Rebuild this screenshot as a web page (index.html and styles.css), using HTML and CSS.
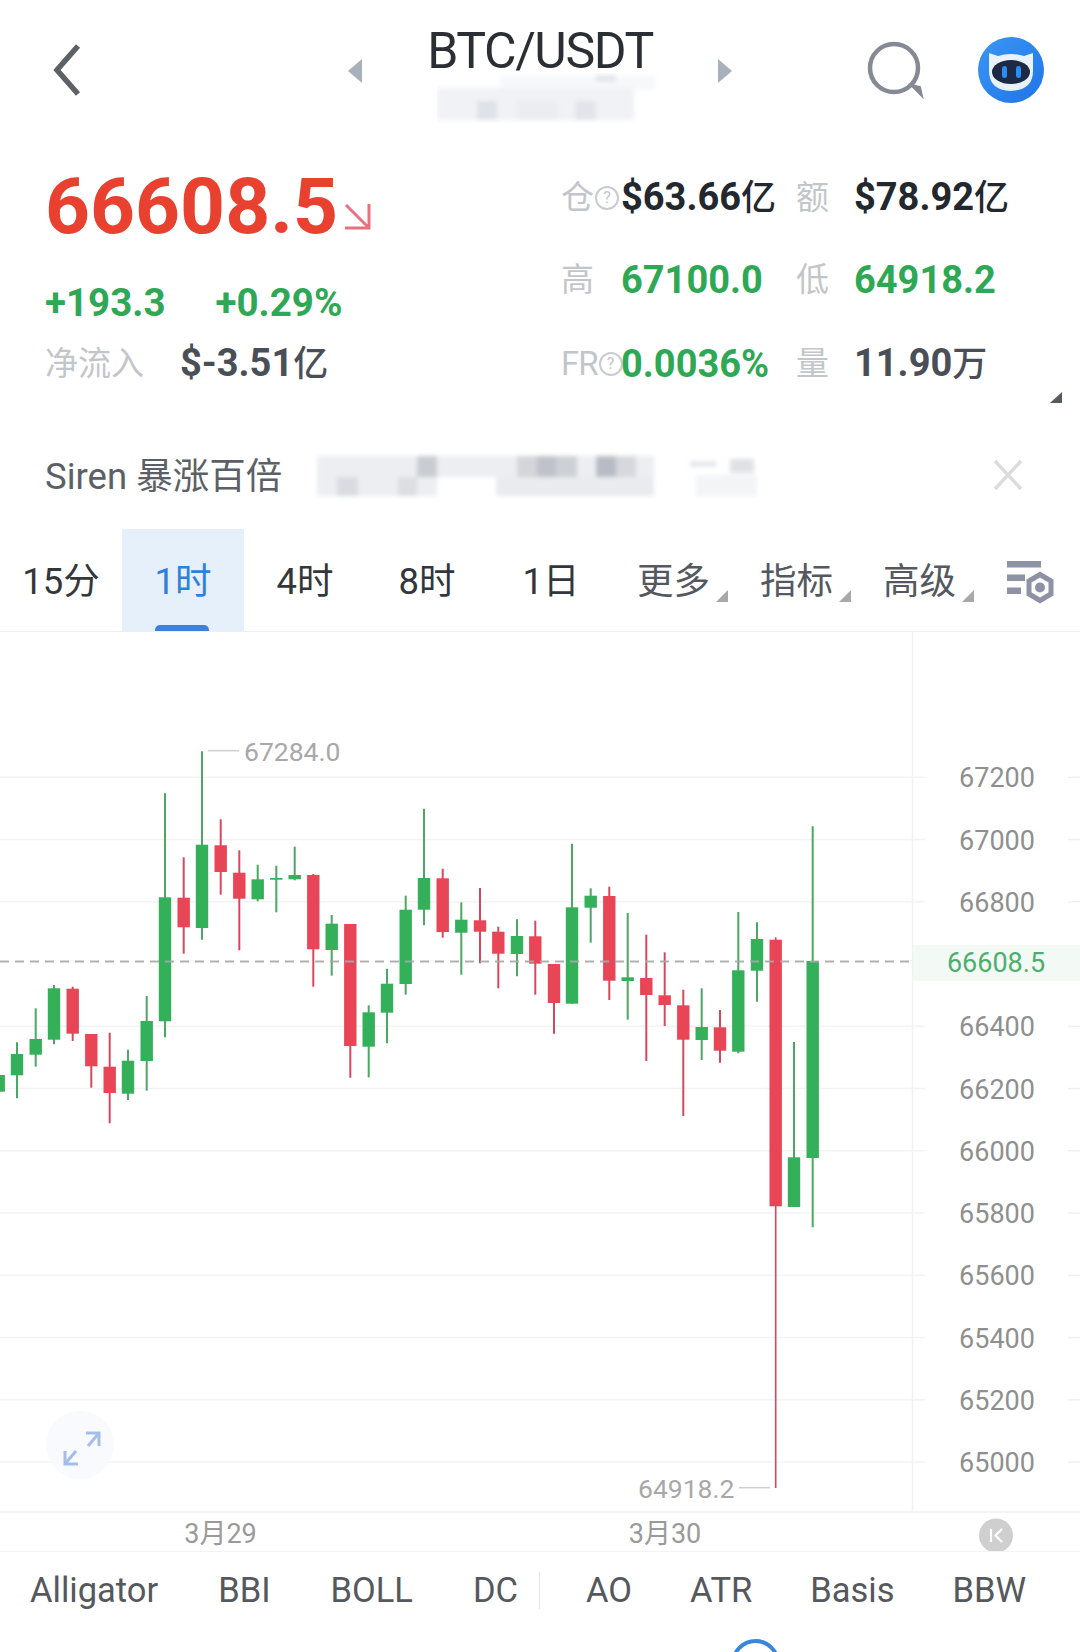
FILE: index.html
```
<!DOCTYPE html>
<html lang="zh-CN">
<head>
    <meta charset="UTF-8">
    <meta name="viewport" content="width=device-width, initial-scale=1.0">
    <title>BTC/USDT</title>
    <link rel="stylesheet" href="styles.css">
</head>
<body>

<header class="topbar">
    <div class="topbar-left">
        <svg class="back-icon" width="28" height="54" viewBox="0 0 28 54"><path d="M25 3 L4 27 L25 51" fill="none" stroke="#5c6168" stroke-width="5.5"/></svg>
    </div>
    <div class="pair-nav">
        <span class="nav-arrow nav-prev"></span>
        <div class="pair">
            <h1 class="pair-name">BTC/USDT</h1>
            <svg class="blur-block" width="226" height="52" viewBox="437 72 226 52">
                <g filter="url(#soft)">
                    <rect x="500" y="75" width="155" height="14" fill="#f7f8fa"/>
                    <rect x="596" y="74" width="20" height="7" fill="#e4e6ea"/>
                    <rect x="437" y="87" width="197" height="32" fill="#f0f2f5"/>
                    <rect x="477" y="100" width="20" height="19" fill="#dfe2e9"/>
                    <rect x="517" y="100" width="41" height="19" fill="#ebedf1"/>
                    <rect x="575" y="100" width="21" height="19" fill="#e2e4ea"/>
                </g>
            </svg>
        </div>
        <span class="nav-arrow nav-next"></span>
    </div>
    <div class="topbar-right">
        <svg width="60" height="60" viewBox="0 0 60 60"><circle cx="28" cy="27" r="24" fill="none" stroke="#868a94" stroke-width="4.5"/><path d="M45 44 L56 55 L54 46 Z" fill="#868a94" stroke="#868a94" stroke-width="2"/></svg>
        <svg class="logo" width="66" height="66" viewBox="0 0 66 66">
            <defs><linearGradient id="logoBlue" x1="0" y1="0" x2="1" y2="1"><stop offset="0" stop-color="#3a97f5"/><stop offset="1" stop-color="#1f74e6"/></linearGradient></defs>
            <circle cx="33" cy="33" r="33" fill="url(#logoBlue)"/>
            <path d="M11 16 L20 19 Q33 15 46 19 L55 16 L55 34 Q55 53 33 54 Q11 53 11 34 Z" fill="#e9f1fb"/>
            <ellipse cx="33" cy="35" rx="19" ry="12" fill="#1c2a44"/>
            <rect x="24" y="29" width="5" height="12" rx="2.5" fill="#2a8cf5"/>
            <rect x="38" y="29" width="5" height="12" rx="2.5" fill="#2a8cf5"/>
        </svg>
    </div>
</header>

<section class="stats">
    <div class="stats-left">
        <div class="price-line">
            <span class="price">66608.5</span>
            <svg class="price-arrow" width="28" height="28" viewBox="0 0 28 28"><path d="M2 26 H26 V2 M3 3 L25 25" fill="none" stroke="#e8707f" stroke-width="3"/></svg>
        </div>
        <div class="change-line">
            <span class="up">+193.3</span>
            <span class="up">+0.29%</span>
        </div>
        <div class="flow-line">
            <span class="label">净流入</span>
            <span class="flow-value">$-3.51<span class="unit">亿</span></span>
        </div>
    </div>
    <div class="stats-right">
        <div class="label label-tip">仓<i class="tip">?</i></div>
        <div class="value">$63.66<span class="unit">亿</span></div>
        <div class="label">额</div>
        <div class="value">$78.92<span class="unit">亿</span></div>

        <div class="label">高</div>
        <div class="value up">67100.0</div>
        <div class="label">低</div>
        <div class="value up">64918.2</div>

        <div class="label label-tip label-fr">FR<i class="tip">?</i></div>
        <div class="value up">0.0036%</div>
        <div class="label">量</div>
        <div class="value muted">11.90<span class="unit">万</span></div>
    </div>
    <span class="stats-more"></span>
</section>

<section class="banner">
    <span class="banner-text">Siren 暴涨百倍</span>
    <svg class="blur-block banner-blur" width="452" height="52" viewBox="312 452 452 52">
        <g filter="url(#soft)">
            <rect x="317" y="457" width="337" height="21" fill="#eceef1"/>
            <rect x="317" y="478" width="120" height="19" fill="#eceef1"/>
            <rect x="496" y="478" width="158" height="19" fill="#eaebee"/>
            <rect x="417" y="457" width="20" height="21" fill="#c9ccd2"/>
            <rect x="337" y="478" width="21" height="19" fill="#d9dbe0"/>
            <rect x="398" y="478" width="19" height="19" fill="#dcdee2"/>
            <rect x="517" y="457" width="20" height="21" fill="#d3d5da"/>
            <rect x="537" y="457" width="19" height="21" fill="#bfc2c9"/>
            <rect x="556" y="457" width="21" height="21" fill="#cdd0d5"/>
            <rect x="596" y="457" width="20" height="21" fill="#b7bbc3"/>
            <rect x="616" y="457" width="20" height="21" fill="#d6d8dd"/>
            <rect x="690" y="462" width="26" height="6" fill="#e6e7ea"/>
            <rect x="730" y="460" width="24" height="14" fill="#dfe1e5"/>
            <rect x="696" y="476" width="61" height="21" fill="#f3f4f6"/>
        </g>
    </svg>
    <svg class="banner-close" width="32" height="32" viewBox="0 0 32 32"><path d="M3 2 L29 30 M29 2 L3 30" fill="none" stroke="#dcdcdc" stroke-width="3.5"/></svg>
</section>

<nav class="tabs">
    <div class="tab">15分</div>
    <div class="tab tab-active">1时</div>
    <div class="tab">4时</div>
    <div class="tab">8时</div>
    <div class="tab tab-day">1日</div>
    <div class="tab tab-menu">更多</div>
    <div class="tab tab-menu">指标</div>
    <div class="tab tab-menu">高级</div>
    <svg class="tab-settings" width="50" height="44" viewBox="0 0 50 44">
        <rect x="0" y="0" width="34" height="6.5" fill="#8d93a5"/>
        <rect x="0" y="13.5" width="18" height="6.5" fill="#8d93a5"/>
        <rect x="0" y="26.5" width="14" height="6.5" fill="#8d93a5"/>
        <path d="M33 13.5 L44 20 V33 L33 39.5 L22 33 V20 Z" fill="none" stroke="#8d93a5" stroke-width="5"/>
        <circle cx="33" cy="26.5" r="5" fill="#8d93a5"/>
    </svg>
</nav>

<svg id="chart" class="chart" width="1080" height="920" viewBox="0 632 1080 920"></svg>

<footer class="indicators">
    <div class="ind-group">
        <span>Alligator</span>
        <span>BBI</span>
        <span>BOLL</span>
        <span>DC</span>
    </div>
    <span class="ind-divider"></span>
    <div class="ind-group ind-group-right">
        <span>AO</span>
        <span>ATR</span>
        <span>Basis</span>
        <span>BBW</span>
    </div>
</footer>

<div class="bottom-arc"></div>

<svg class="defs" width="0" height="0"><defs><filter id="soft" x="-5%" y="-20%" width="110%" height="140%"><feGaussianBlur stdDeviation="2"/></filter></defs></svg>

<script src="chart.js"></script>
</body>
</html>
```

FILE: styles.css
```
* {
    box-sizing: border-box;
}
html, body {
    margin: 0;
    padding: 0;
}
body {
    position: relative;
    width: 1080px;
    height: 1652px;
    overflow: hidden;
    background-color: #fff;
    color: #23272e;
    font-family: Roboto, "Noto Sans CJK SC", sans-serif;
}

/* top bar */
.topbar {
    display: grid;
    grid-template-columns: 348px 384px 348px;
    height: 156px;
}
.topbar-left {
    padding: 43px 0 0 53px;
}
.back-icon {
    display: block;
}
.pair-nav {
    display: flex;
    justify-content: space-between;
    align-items: flex-start;
}
.nav-arrow {
    width: 0;
    height: 0;
    margin-top: 59px;
    border-top: 12px solid transparent;
    border-bottom: 12px solid transparent;
}
.nav-prev {
    border-right: 14px solid #a8b0bc;
}
.nav-next {
    border-left: 14px solid #a8b0bc;
}
.pair {
    width: 226px;
    padding-top: 23px;
}
.pair-name {
    margin: 0;
    font-size: 50px;
    font-weight: 400;
    line-height: 56px;
    letter-spacing: -1.4px;
    text-align: center;
    white-space: nowrap;
    color: #2b2e33;
}
.blur-block {
    display: block;
}
.pair .blur-block {
    margin-top: -6px;
    margin-left: 10px;
}
.topbar-right {
    display: flex;
    justify-content: flex-end;
    align-items: flex-start;
    gap: 52px;
    padding: 41px 36px 0 0;
}
.logo {
    margin-top: -4px;
}

/* price block */
.stats {
    position: relative;
    display: flex;
    height: 249px;
}
.stats-left {
    width: 561px;
    padding: 5px 0 0 45px;
}
.price-line {
    display: flex;
    align-items: flex-start;
    height: 90px;
}
.price {
    font-size: 78.5px;
    font-weight: 700;
    line-height: 90px;
    color: #e8412f;
}
.price-arrow {
    margin: 41px 0 0 5px;
}
.change-line {
    display: flex;
    gap: 50px;
    margin-top: 29px;
    font-size: 38.5px;
    font-weight: 700;
    line-height: 46px;
}
.flow-line {
    display: flex;
    align-items: center;
    gap: 36px;
    margin-top: 14px;
    line-height: 46px;
}
.flow-value {
    font-size: 38px;
    font-weight: 700;
    line-height: 46px;
    color: #4a4f57;
}
.unit {
    font-size: 35px;
    font-weight: 500;
}
.up {
    color: #2fa855;
}
.muted {
    color: #4a4f57;
}
.label {
    font-size: 33px;
    line-height: 40px;
    color: #c2c6ca;
    white-space: nowrap;
}
.stats-right {
    display: grid;
    grid-template-columns: 60px 175px 58px auto;
    grid-template-rows: 81px 84px 83px;
    align-items: center;
    flex: 1;
    margin-top: 1px;
}
.value {
    font-size: 38px;
    font-weight: 700;
    line-height: 40px;
    white-space: nowrap;
}
.label-tip {
    display: flex;
    align-items: center;
}
.label-fr {
    letter-spacing: -1px;
}
.tip {
    width: 24px;
    height: 24px;
    margin-left: 1px;
    border: 2px solid #c8ccd0;
    border-radius: 50%;
    font-size: 16px;
    font-style: normal;
    line-height: 20px;
    letter-spacing: 0;
    text-align: center;
    flex-shrink: 0;
}
.stats-more {
    position: absolute;
    right: 18px;
    bottom: 2px;
    width: 0;
    height: 0;
    border-left: 12px solid transparent;
    border-bottom: 11px solid #555a60;
}

/* announcement */
.banner {
    position: relative;
    display: flex;
    align-items: center;
    height: 68px;
    margin-top: 36px;
    padding: 4px 0 0 45px;
}
.banner-text {
    font-size: 36.5px;
    line-height: 44px;
    color: #5c6066;
    white-space: nowrap;
}
.banner-blur {
    position: absolute;
    left: 312px;
    top: 10px;
}
.banner-close {
    position: absolute;
    left: 992px;
    top: 18px;
}

/* timeframes */
.tabs {
    display: flex;
    height: 103px;
    margin-top: 20px;
    border-bottom: 1px solid #eeeff1;
}
.tab {
    position: relative;
    width: 122px;
    font-size: 36.5px;
    line-height: 106px;
    text-align: center;
    color: #33363b;
}
.tab-active {
    background-color: #e6f0fb;
    color: #2f7fdc;
}
.tab-active::after {
    content: "";
    position: absolute;
    left: 33px;
    bottom: 0;
    width: 54px;
    height: 6px;
    border-radius: 5px 5px 0 0;
    background-color: #3b82e0;
}
.tab-day {
    margin-left: 2px;
}
.tab-menu {
    width: 123px;
    color: #55595f;
}
.tab-menu::after {
    content: "";
    position: absolute;
    left: 104px;
    top: 61px;
    width: 0;
    height: 0;
    border-left: 12px solid transparent;
    border-bottom: 12px solid #a9a9a9;
}
.tab-settings {
    margin: 32px 0 0 26px;
}

/* chart */
.chart {
    display: block;
}
.axis-text {
    font-size: 27px;
    fill: #8f8f8f;
    text-anchor: middle;
    dominant-baseline: central;
}
.axis-now {
    fill: #4caf6e;
}
.axis-date {
    fill: #9a9a9a;
}
.peak-text {
    font-size: 26.5px;
    fill: #a8a8a8;
    dominant-baseline: central;
}

/* indicator row */
.indicators {
    display: flex;
    align-items: flex-start;
    padding: 20px 0 0 30px;
    font-size: 34.5px;
    line-height: 37px;
    color: #55585c;
}
.ind-group {
    display: flex;
    gap: 60px;
}
.ind-group-right {
    gap: 58px;
}
.ind-divider {
    width: 1px;
    height: 37px;
    margin: 0 46px 0 21px;
    background-color: #e4e4e4;
}
.bottom-arc {
    position: absolute;
    left: 731px;
    top: 1639px;
    width: 49px;
    height: 49px;
    border: 4px solid #3a85dd;
    border-radius: 50%;
}
.defs {
    position: absolute;
}
```

FILE: chart.js
```
// candles: [x, wick top, wick bottom, body top, body bottom, up?]
const candles = [
    [-1.3, 1075, 1091.7, 1075, 1091.7, 1],
    [17, 1042.3, 1098.3, 1054, 1075.3, 1],
    [35.7, 1008.3, 1066.7, 1039, 1054.7, 1],
    [54, 985, 1044.3, 988.3, 1039.7, 1],
    [72.7, 986.7, 1041, 988.7, 1033.7, 0],
    [91.3, 1034, 1087.7, 1034, 1066.3, 0],
    [109.7, 1032.7, 1123.3, 1066.7, 1093, 0],
    [128, 1049.7, 1100, 1060.7, 1093.7, 1],
    [146.7, 996, 1090.7, 1021, 1061, 1],
    [165, 793.3, 1037.3, 897.3, 1021.3, 1],
    [183.7, 857.3, 953.7, 897.7, 927.3, 0],
    [202, 751.3, 939.7, 844.7, 928, 1],
    [220.7, 819.3, 894.7, 845.3, 872, 0],
    [239.3, 850.3, 950.3, 872.7, 898.7, 0],
    [257.7, 864.7, 901.3, 879.3, 899.3, 1],
    [276.3, 865.7, 912.3, 878, 879.7, 1],
    [294.7, 846.7, 880.3, 875, 879.3, 1],
    [313.3, 874, 986.7, 875, 949.3, 0],
    [331.7, 915, 975.7, 923.7, 950, 1],
    [350.3, 924, 1077.7, 924, 1046, 0],
    [368.7, 1005.3, 1077.3, 1012.3, 1046.7, 1],
    [387, 968.7, 1043.3, 983.7, 1012.7, 1],
    [405.7, 895.7, 994.7, 909.7, 984, 1],
    [424, 808.7, 925.3, 878, 909.7, 1],
    [442.7, 868.7, 937.7, 878.3, 932, 0],
    [461.3, 902.3, 974.7, 919.7, 932.7, 1],
    [480, 888, 963.3, 920.3, 931.7, 0],
    [498.3, 926.7, 988.3, 931.7, 953.7, 0],
    [517, 919.3, 976.3, 936, 954, 1],
    [535.3, 920.7, 994.7, 936.3, 963.7, 0],
    [554, 964, 1033.7, 964, 1003, 0],
    [572, 843.7, 1003.7, 907.3, 1003.7, 1],
    [590.7, 888.3, 942.7, 895.7, 907.7, 1],
    [609.3, 886.7, 1000, 896, 980.7, 0],
    [627.7, 913, 1019.7, 977.3, 981, 1],
    [646.3, 934.7, 1061, 978, 995, 0],
    [664.7, 952.3, 1026, 995.3, 1005, 0],
    [683.3, 989.7, 1116, 1005.3, 1039.7, 0],
    [701.7, 988.3, 1060, 1027, 1040, 1],
    [720, 1010, 1062.7, 1027.3, 1050.7, 0],
    [738.3, 912, 1053.3, 970.3, 1051.7, 1],
    [757, 922.3, 1001.7, 939, 970.7, 1],
    [775.7, 937.3, 1488, 939.7, 1206.3, 0],
    [794, 1042, 1207, 1157.3, 1207, 1],
    [812.7, 826.3, 1227.3, 961, 1158, 1]
];

const priceLevels = [67200, 67000, 66800, 66600, 66400, 66200, 66000, 65800, 65600, 65400, 65200, 65000];

const chart = document.getElementById('chart');

function add(tag, attrs, text) {
    const el = document.createElementNS('http://www.w3.org/2000/svg', tag);
    for (const key in attrs) {
        el.setAttribute(key, attrs[key]);
    }
    if (text) el.textContent = text;
    chart.appendChild(el);
    return el;
}

function line(x1, y1, x2, y2, stroke, width) {
    return add('line', { x1, y1, x2, y2, stroke, 'stroke-width': width });
}

// price grid and axis
priceLevels.forEach((price, i) => {
    const y = 777.3 + i * 62.25;
    if (price === 66600) return;
    line(0, y, 925, y, '#f3f3f4', 1.5);
    line(1068, y, 1080, y, '#f0f0f1', 1.5);
    add('text', { x: 997, y: y + 1, class: 'axis-text' }, String(price));
});

line(912.5, 632, 912.5, 1512, '#f1f1f2', 1.5);
line(0, 1512, 1080, 1512, '#f3f3f4', 2);

// current price tag
add('rect', { x: 913, y: 945, width: 167, height: 36, fill: '#f3f9f5' });
add('text', { x: 996, y: 963, class: 'axis-text axis-now' }, '66608.5');

// candles
candles.forEach(([x, wickTop, wickBot, top, bottom, up]) => {
    const isLong = wickBot - wickTop > 400;
    line(x, wickTop, x, wickBot, up ? '#4aa864' : '#d9475e', isLong && !up ? 1.6 : 2);
    add('rect', {
        x: x - 6.2,
        y: top,
        width: 12.4,
        height: bottom - top,
        fill: up ? '#35b05a' : '#e84556'
    });
});

// last price line
const nowLine = line(0, 961.5, 910, 961.5, '#a8a8a8', 2);
nowLine.setAttribute('stroke-dasharray', '9 6');
nowLine.setAttribute('opacity', '0.9');

// high and low marks
line(208, 750.7, 239, 750.7, '#cfcfcf', 1.5);
add('text', { x: 244, y: 751, class: 'peak-text' }, '67284.0');
line(739, 1487.7, 770, 1487.7, '#cfcfcf', 1.5);
add('text', { x: 638, y: 1488, class: 'peak-text' }, '64918.2');

// expand button
add('circle', { cx: 80, cy: 1445, r: 34, fill: '#f8fafe' });
add('path', {
    d: 'M86 1433 H99 V1446 M99 1433 L88 1446 M65 1451 V1464 H78 M65 1464 L76 1451',
    fill: 'none',
    stroke: '#a5bee8',
    'stroke-width': 3
});

// time axis
add('text', { x: 220.5, y: 1534, class: 'axis-text axis-date' }, '3月29');
add('text', { x: 665, y: 1534, class: 'axis-text axis-date' }, '3月30');

// back to latest button
add('circle', { cx: 996, cy: 1535.5, r: 17, fill: '#cfcfcf' });
add('path', {
    d: 'M991 1529 V1542 M1002 1529 L995.5 1535.5 L1002 1542',
    fill: 'none',
    stroke: '#fff',
    'stroke-width': 2.2
});
line(0, 1552, 1080, 1552, '#f3f3f4', 2);
```
